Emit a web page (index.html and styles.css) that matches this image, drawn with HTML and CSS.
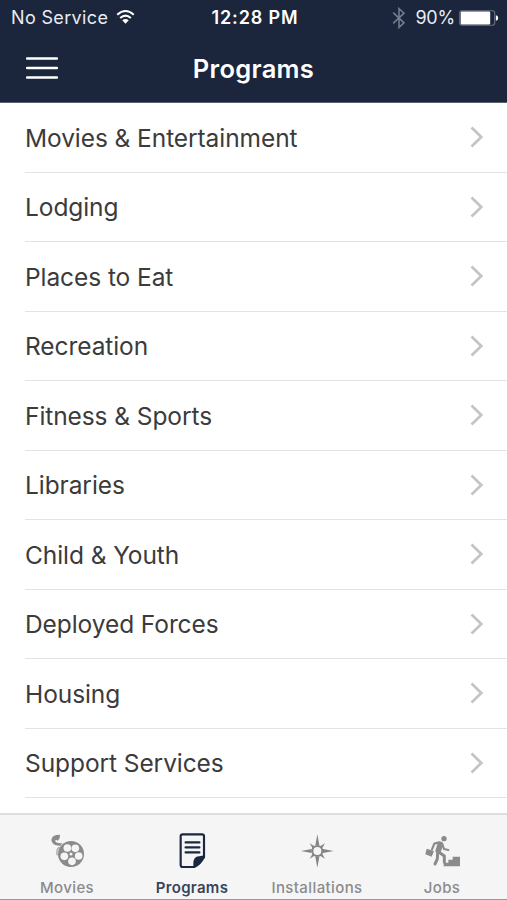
FILE: index.html
```html
<!DOCTYPE html>
<html lang="en">
<head>
<meta charset="utf-8">
<title>Programs</title>
<link rel="stylesheet" href="styles.css">
</head>
<body>
<div class="app">
  <header class="header">
    <div class="status">
      <div class="carrier"><span class="carrier-name">No Service</span>
        <svg class="wifi" viewBox="0 0 20 16" width="19" height="16"><g fill="none" stroke="#fff" stroke-width="2.1"><path d="M1.3 5.6Q10-2.4 18.7 5.6"/><path d="M4.4 9.1Q10 4 15.6 9.1"/></g><path fill="#fff" d="M6.6 11.5Q10 8.7 13.4 11.5L10 15.2Z"/></svg>
      </div>
      <span class="time">12:28 PM</span>
      <div class="power">
        <svg class="bluetooth" viewBox="0 0 14 22" width="14" height="22"><path fill="none" stroke="#737b8c" stroke-width="1.6" d="M1.2 5.6L12 15.8L7 20.4V1.6L12 6.2L1.2 16.4"/></svg>
        <span class="percent">90%</span>
        <svg class="battery" viewBox="0 0 40 16" width="40" height="16"><rect x=".7" y=".7" width="35" height="14.6" rx="2.2" fill="none" stroke="#687184" stroke-width="1.1"/><rect x="1.7" y="1.6" width="29.5" height="12.8" rx="1.2" fill="#fff"/><path fill="#fff" d="M36.9 5.2Q39.2 5.5 39.2 8T36.9 10.8Z"/></svg>
      </div>
    </div>
    <div class="navbar">
      <svg class="menu" viewBox="0 0 32 24" width="32" height="24"><path stroke="#fff" stroke-width="2.3" stroke-linecap="round" d="M1 2.5H31M1 12H31M1 21.5H31"/></svg>
      <h1 class="title">Programs</h1>
    </div>
  </header>
  <ul class="list">
    <li class="row"><span class="name">Movies &amp; Entertainment</span><svg class="chevron" viewBox="0 0 14 22" width="14" height="22"><path d="M1.5 1.5L11.3 11L1.5 20.5"/></svg></li>
    <li class="row"><span class="name">Lodging</span><svg class="chevron" viewBox="0 0 14 22" width="14" height="22"><path d="M1.5 1.5L11.3 11L1.5 20.5"/></svg></li>
    <li class="row"><span class="name">Places to Eat</span><svg class="chevron" viewBox="0 0 14 22" width="14" height="22"><path d="M1.5 1.5L11.3 11L1.5 20.5"/></svg></li>
    <li class="row"><span class="name">Recreation</span><svg class="chevron" viewBox="0 0 14 22" width="14" height="22"><path d="M1.5 1.5L11.3 11L1.5 20.5"/></svg></li>
    <li class="row"><span class="name">Fitness &amp; Sports</span><svg class="chevron" viewBox="0 0 14 22" width="14" height="22"><path d="M1.5 1.5L11.3 11L1.5 20.5"/></svg></li>
    <li class="row"><span class="name">Libraries</span><svg class="chevron" viewBox="0 0 14 22" width="14" height="22"><path d="M1.5 1.5L11.3 11L1.5 20.5"/></svg></li>
    <li class="row"><span class="name">Child &amp; Youth</span><svg class="chevron" viewBox="0 0 14 22" width="14" height="22"><path d="M1.5 1.5L11.3 11L1.5 20.5"/></svg></li>
    <li class="row"><span class="name">Deployed Forces</span><svg class="chevron" viewBox="0 0 14 22" width="14" height="22"><path d="M1.5 1.5L11.3 11L1.5 20.5"/></svg></li>
    <li class="row"><span class="name">Housing</span><svg class="chevron" viewBox="0 0 14 22" width="14" height="22"><path d="M1.5 1.5L11.3 11L1.5 20.5"/></svg></li>
    <li class="row"><span class="name">Support Services</span><svg class="chevron" viewBox="0 0 14 22" width="14" height="22"><path d="M1.5 1.5L11.3 11L1.5 20.5"/></svg></li>
  </ul>
  <nav class="tabs">
    <div class="tab">
      <svg class="icon" viewBox="51 123 120 120"><circle cx="123" cy="192" r="39" fill="#8b8b8b"/><g fill="#f5f5f5"><circle cx="112" cy="174" r="11.5"/><circle cx="136" cy="175" r="11.5"/><circle cx="146" cy="198" r="11.5"/><circle cx="126" cy="214" r="11.5"/><circle cx="103" cy="199" r="11.5"/><circle cx="123" cy="192" r="4.5"/></g><path fill="#8b8b8b" d="M64 150Q65 134 90 134Q91 146 84 152L78 149L75 153Q81 162 97 159L91 167Q66 168 64 150Z"/><path fill="none" stroke="#a8a8a8" stroke-width="4" d="M88 171Q77 180 82 196"/></svg>
      <span class="label">Movies</span>
    </div>
    <div class="tab tab-active">
      <svg class="icon" viewBox="96 123 120 120"><path fill="none" stroke="#1b2740" stroke-width="6.5" stroke-linejoin="round" d="M128 133H186Q192 133 192 139V202L162 231H128Q122 231 122 225V139Q122 133 128 133Z"/><path fill="#1b2740" d="M160 232V222Q160 198 178 199L194 196V203Q184 224 165 233Z"/><path stroke="#1b2740" stroke-width="7" stroke-linecap="round" d="M137 157H178M137 172H178M137 187H178"/></svg>
      <span class="label">Programs</span>
    </div>
    <div class="tab">
      <svg class="icon" viewBox="96 123 120 120"><path fill="#858585" d="M157 133L163 166H151ZM157 233L163 200H151ZM108 183L140 177V189ZM206 183L174 177V189ZM134 160L151 170L144 177ZM180 160L170 177L163 170ZM134 206L144 189L151 196ZM180 206L163 196L170 189Z"/><circle cx="157" cy="183" r="15" fill="#f5f5f5" stroke="#858585" stroke-width="6"/></svg>
      <span class="label">Installations</span>
    </div>
    <div class="tab">
      <svg class="icon" viewBox="66 123 120 120"><circle cx="132" cy="146" r="8" fill="#8b8b8b"/><path fill="#8b8b8b" d="M80 176L102 183L95 200L76 193ZM131 229V218H145V209H158V200H180V229Z"/><g fill="none" stroke="#8b8b8b" stroke-linecap="round" stroke-linejoin="round"><path stroke-width="6.5" d="M96 178L103 161L118 157M127 163L132 177L145 180"/><path stroke-width="17" d="M121 163L115 181"/><path stroke-width="9" d="M115 185L133 198V217M113 187L112 207L105 222"/></g></svg>
      <span class="label">Jobs</span>
    </div>
  </nav>
</div>
</body>
</html>
```
FILE: styles.css
```css
* { box-sizing: border-box; }
body { margin: 0; font-family: Inter, "Liberation Sans", sans-serif; background: #fff; }
.app { display: flex; flex-direction: column; width: 507px; height: 900px; overflow: hidden; }
.header { height: 103px; background: #1b253b; border-bottom: 1px solid #59616e; color: #fff; }
.status { display: grid; grid-template-columns: 1fr auto 1fr; align-items: center; height: 36px; padding: 0 8px 0 11px; font-size: 18px; line-height: 36px; }
.carrier { display: flex; align-items: center; gap: 8px; color: #e9ecf2; }
.carrier-name { letter-spacing: .35px; }
.wifi { margin-bottom: 3px; }
.time { font-weight: 600; letter-spacing: .85px; }
.power { display: flex; align-items: center; justify-content: flex-end; color: #e9ecf2; }
.bluetooth { margin-right: 9px; }
.percent { margin-right: 4px; letter-spacing: -.2px; }
.navbar { display: grid; grid-template-columns: 1fr auto 1fr; align-items: center; height: 64px; padding: 0 26px; }
.menu { margin-bottom: 1px; }
.title { margin: 0; padding-top: 1px; font-size: 25.5px; font-weight: 600; line-height: 63px; letter-spacing: .3px; }
.list { flex: 1; margin: 0; padding: 0 0 0 25px; list-style: none; }
.row { display: flex; align-items: center; justify-content: space-between; height: 69.5px; padding-right: 23px; border-bottom: 1px solid #e3e3e3; }
.name { padding-top: 1px; color: #3b3b3b; font-size: 24.5px; line-height: 34px; letter-spacing: -.08px; white-space: nowrap; }
.chevron { fill: none; stroke: #c4c4c6; stroke-width: 2.7; }
.tabs { display: flex; height: 87px; padding: 16px 2px 0 4.5px; background: #f5f5f5; border-top: 2px solid #dedede; border-bottom: 1px solid #999; }
.tab { display: flex; flex-direction: column; align-items: center; width: 125px; color: #8b8b8b; }
.icon { width: 40px; height: 40px; flex: none; }
.label { margin-top: 7px; font-size: 15px; font-weight: 500; line-height: 20px; letter-spacing: .4px; }
.tab-active { color: #39435a; }
.tab-active .label { font-weight: 600; letter-spacing: .3px; }
```
